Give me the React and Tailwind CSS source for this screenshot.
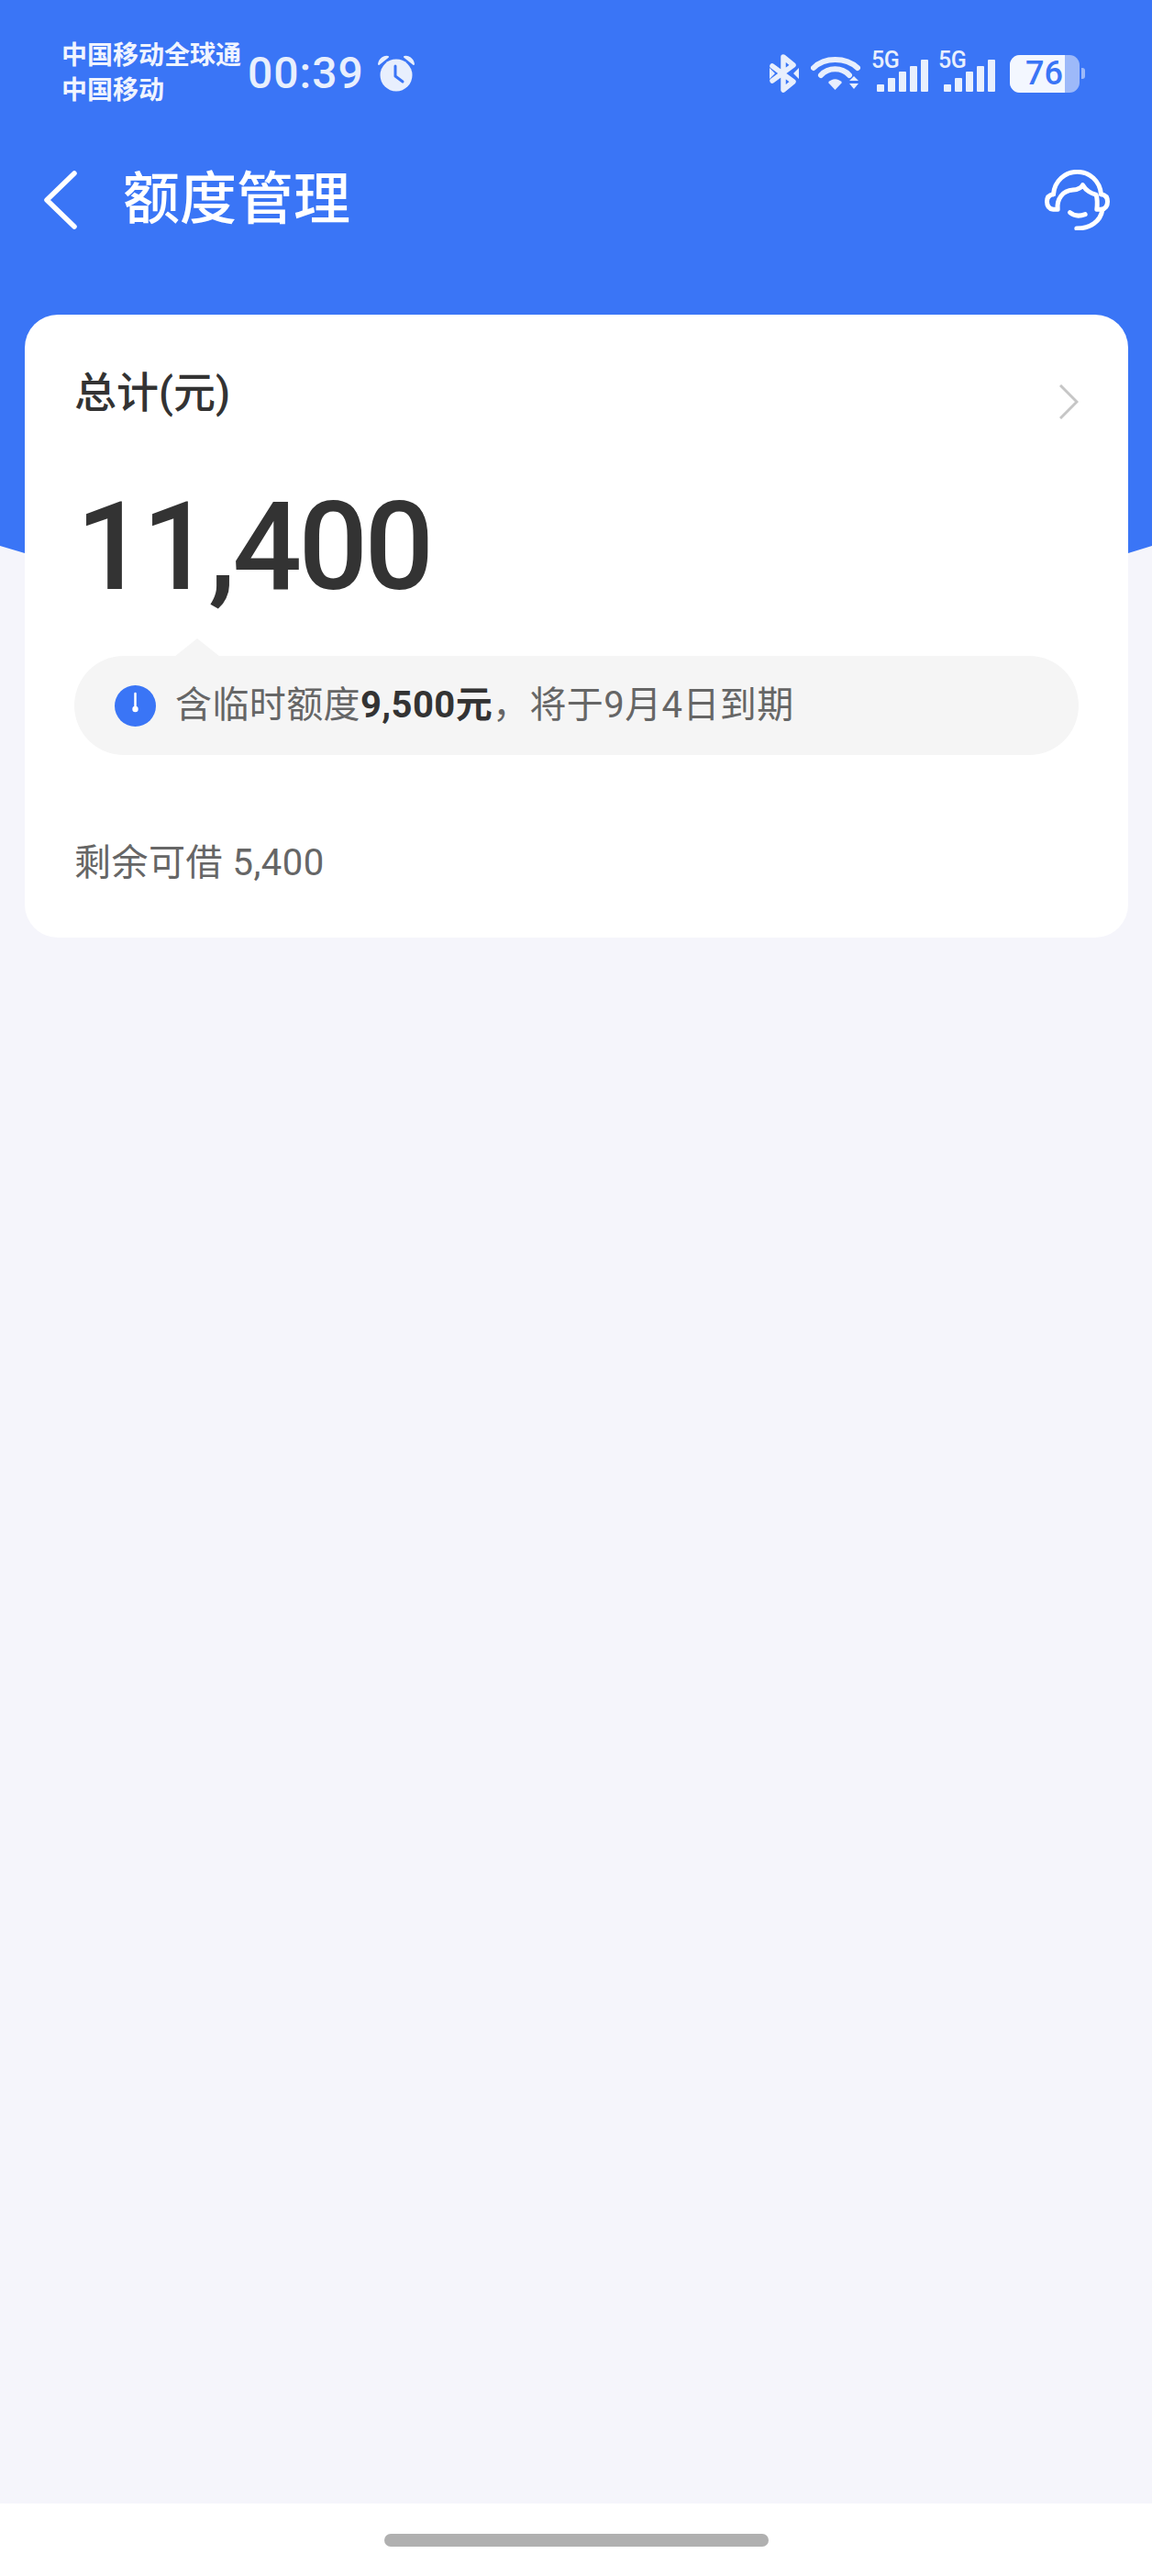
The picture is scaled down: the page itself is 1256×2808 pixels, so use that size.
import React from 'react';

const FONT = "font-['Roboto','Noto_Sans_CJK_SC',sans-serif]";

const AlarmIcon = () => (
  <svg width="42" height="42" viewBox="0 0 42 42" className="ml-[14px]">
    <circle cx="21" cy="23" r="17.5" fill="#e8effd" />
    <path d="M2 11 C3 5 8 2 12 3 Z M40 11 C39 5 34 2 30 3 Z" fill="#e8effd" stroke="#e8effd" strokeWidth="2" strokeLinejoin="round" />
    <path d="M20 13 V24 L28 30" fill="none" stroke="#3a75f6" strokeWidth="3" strokeLinecap="round" strokeLinejoin="round" />
  </svg>
);

const BluetoothIcon = () => (
  <svg width="32" height="42" viewBox="0 0 32 42">
    <path d="M3 13 L26 30 L15 39 V3 L26 12 L3 29" fill="none" stroke="#e8effd" strokeWidth="5.5" strokeLinejoin="round" strokeLinecap="round" />
    <path d="M0 15 L6 21 L0 27 Z M32 15 L26 21 L32 27 Z" fill="#e8effd" />
  </svg>
);

const WifiIcon = () => (
  <svg width="55" height="40" viewBox="0 0 55 40" className="ml-[13px]">
    <path d="M3 14 C15 2 38 2 51 14" fill="none" stroke="#e8effd" strokeWidth="6" strokeLinecap="round" />
    <path d="M11 22 C19 13 34 13 42 22" fill="none" stroke="#e8effd" strokeWidth="6" strokeLinecap="round" />
    <path d="M19 30 C23 25 30 25 34 30 L26.5 38 Z" fill="#e8effd" />
    <path d="M42 28 L47 23 L52 28 Z M42 31 L52 31 L47 37 Z" fill="#e8effd" />
  </svg>
);

const Signal = () => (
  <div className="relative w-[62px] h-[42px] ml-[11px]">
    <span className="absolute left-0 top-[-7px] text-[25px] leading-[28px] tracking-[-0.5px] font-medium text-[#e8effd]">5G</span>
    <div className="absolute left-[6px] bottom-[1px] flex items-end gap-[4px]">
      <div className="w-[8px] h-[8px] bg-[#e8effd] rounded-[1px]" />
      <div className="w-[8px] h-[15px] bg-[#e8effd] rounded-[1px]" />
      <div className="w-[8px] h-[22px] bg-[#e8effd] rounded-[1px]" />
      <div className="w-[8px] h-[28px] bg-[#e8effd] rounded-[1px]" />
      <div className="w-[8px] h-[35px] bg-[#e8effd] rounded-[1px]" />
    </div>
  </div>
);

const Battery = () => (
  <div className="flex items-center ml-[16px]">
    <div className="w-[76px] h-[41px] rounded-[11px] bg-[#9db9f9] overflow-hidden">
      <div className="w-[60px] h-full bg-[#f3f7ff] flex items-center justify-end pr-[2px]">
        <span className="text-[36px] leading-none font-medium text-[#3a75f6]">76</span>
      </div>
    </div>
    <div className="w-[4px] h-[12px] ml-[2px] rounded-r-[3px] bg-[#9db9f9]" />
  </div>
);

const HeadsetIcon = () => (
  <svg width="71" height="66" viewBox="0 0 212 198" fill="none" stroke="#ffffff" strokeWidth="15" strokeLinecap="round" strokeLinejoin="round">
    <path d="M28 80 C32 36 66 7 106 7 C146 7 180 36 184 80" />
    <path d="M28 80 C14 82 7 90 7 104 C7 118 14 128 28 130 L42 130 C38 96 58 68 92 66 C106 65 118 60 124 50 C136 70 150 76 168 82 C172 96 172 112 170 130 L184 130 C198 128 205 118 205 104 C205 90 198 82 184 80" />
    <path d="M82 140 C96 152 116 152 132 146" />
    <path d="M188 132 C182 168 150 192 104 192" />
  </svg>
);

const ClockBadge = () => (
  <svg width="45" height="45" viewBox="0 0 45 45" className="shrink-0">
    <circle cx="22.5" cy="22.5" r="22.5" fill="#3a75f6" />
    <path d="M22.5 9 V24" stroke="#ffffff" strokeWidth="2.5" strokeLinecap="round" />
    <circle cx="22.5" cy="26" r="3.2" fill="#ffffff" />
  </svg>
);

export default function App() {
  return (
    <div lang="zh-CN" className={`${FONT} min-h-[2808px] flex flex-col bg-[#f5f5fb]`}>
      <header className="bg-[#3a75f6]">
        {/* status bar */}
        <div className="h-[160px] flex items-center pl-[67px] pr-[73px]">
          <div className="text-[28px] leading-[38px] font-bold text-[#f0f4fe] w-[203px] shrink-0">
            <div>中国移动全球通</div>
            <div>中国移动</div>
          </div>
          <span className="text-[48px] leading-none font-medium tracking-[1px] text-[#e8effd]">00:39</span>
          <AlarmIcon />
          <div className="ml-auto flex items-center">
            <BluetoothIcon />
            <WifiIcon />
            <Signal />
            <Signal />
            <Battery />
          </div>
        </div>

        {/* title bar */}
        <div className="h-[116px] flex items-center pl-[47px] pr-[46px]">
          <svg width="38" height="64" viewBox="0 0 38 64" fill="none" stroke="#ffffff" strokeWidth="5.5" strokeLinecap="round" strokeLinejoin="round">
            <path d="M34 3 L4 32 L34 61" />
          </svg>
          <h1 className="ml-[49px] text-[62px] leading-none font-medium text-white">额度管理</h1>
          <div className="ml-auto">
            <HeadsetIcon />
          </div>
        </div>
        <div className="h-[319px]" />
      </header>
      <svg viewBox="0 0 1256 45" className="block w-full h-[45px]">
        <path d="M0 0 H1256 L1230 8 Q628 90 27 8 Z" fill="#3a75f6" />
      </svg>

      <main className="ml-[27px] mr-[26px] -mt-[297px] relative">
        <section className="bg-white rounded-[36px] h-[679px] pt-[55px] px-[54px]">
          <div className="flex items-start justify-between h-[70px]">
            <span className="text-[46px] leading-[60px] font-medium text-[#333333]">总计(元)</span>
            <svg width="21" height="38" viewBox="0 0 21 38" fill="none" stroke="#c6c6c6" strokeWidth="3" className="mt-[21px]">
              <path d="M1 1 L19 19 L1 37" />
            </svg>
          </div>
          <div className="mt-[62px] pl-[2px] text-[133px] leading-[133px] font-medium tracking-[-3.5px] text-[#333333]">11,400</div>
          <div className="relative mt-[52px] h-[108px] rounded-full bg-[#f5f5f5] flex items-center pl-[44px]">
            <div className="absolute left-[109px] top-[-19px] w-0 h-0 border-x-[25px] border-x-transparent border-b-[20px] border-b-[#f5f5f5]" />
            <ClockBadge />
            <p className="ml-[21px] text-[40px] leading-none tracking-[0.4px] text-[#666666] whitespace-nowrap">
              含临时额度<strong className="font-bold text-[#333333]">9,500元</strong>，将于9月4日到期
            </p>
          </div>
          <p className="mt-[95px] text-[40px] leading-[46px] tracking-[0.5px] text-[#666666]">剩余可借 5,400</p>
        </section>
      </main>

      <footer className="mt-auto h-[79px] bg-white flex justify-center pt-[33px]">
        <div className="w-[419px] h-[14px] rounded-full bg-[#b0b0b0]" />
      </footer>
    </div>
  );
}
